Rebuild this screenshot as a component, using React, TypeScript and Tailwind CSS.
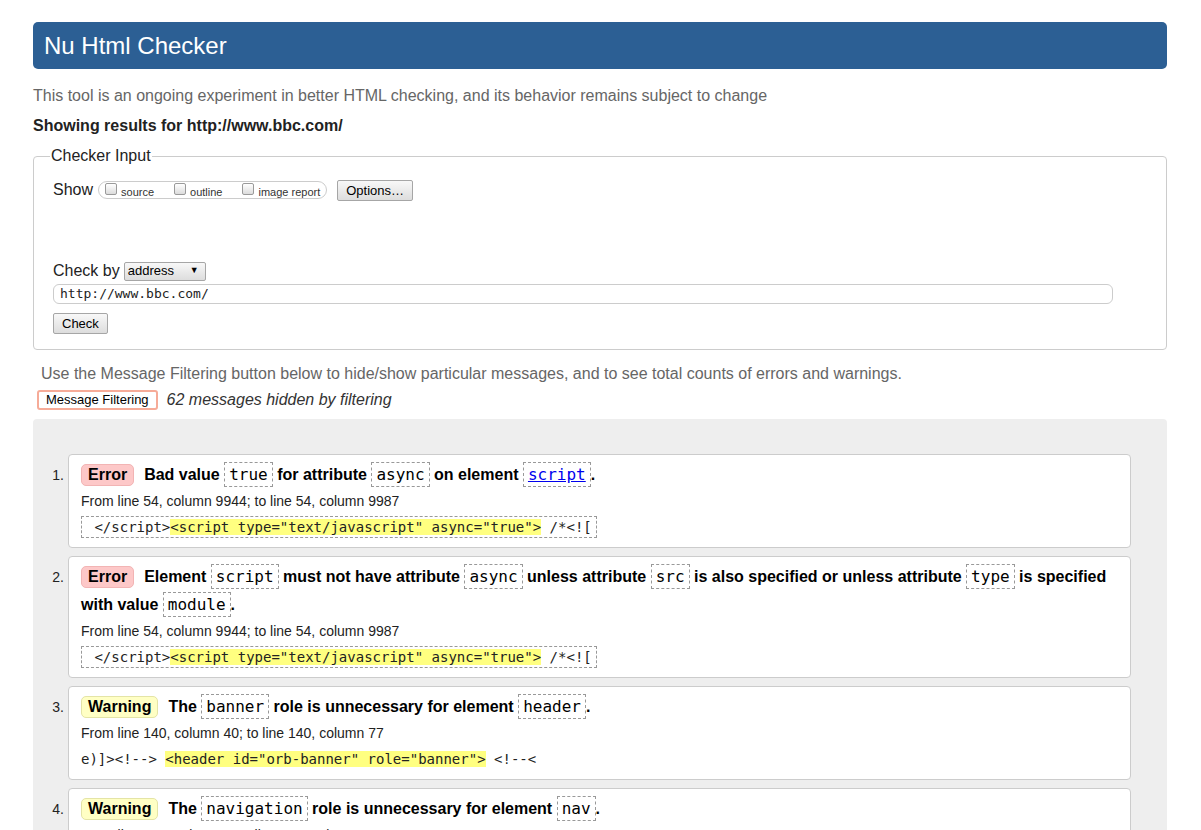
import React from 'react';

type Part = { t: string; code?: boolean; link?: boolean };

interface Message {
    kind: 'Error' | 'Warning';
    parts: Part[];
    location: string;
    extract: { before: string; hl: string; after: string; boxed: boolean };
}

const messages: Message[] = [
    {
        kind: 'Error',
        parts: [
            { t: 'Bad value' },
            { t: 'true', code: true },
            { t: 'for attribute' },
            { t: 'async', code: true },
            { t: 'on element' },
            { t: 'script', code: true, link: true },
        ],
        location: 'From line 54, column 9944; to line 54, column 9987',
        extract: { before: ' </script>', hl: '<script type="text/javascript" async="true">', after: ' /*<![', boxed: true },
    },
    {
        kind: 'Error',
        parts: [
            { t: 'Element' },
            { t: 'script', code: true },
            { t: 'must not have attribute' },
            { t: 'async', code: true },
            { t: 'unless attribute' },
            { t: 'src', code: true },
            { t: 'is also specified or unless attribute' },
            { t: 'type', code: true },
            { t: 'is specified with value' },
            { t: 'module', code: true },
        ],
        location: 'From line 54, column 9944; to line 54, column 9987',
        extract: { before: ' </script>', hl: '<script type="text/javascript" async="true">', after: ' /*<![', boxed: true },
    },
    {
        kind: 'Warning',
        parts: [
            { t: 'The' },
            { t: 'banner', code: true },
            { t: 'role is unnecessary for element' },
            { t: 'header', code: true },
        ],
        location: 'From line 140, column 40; to line 140, column 77',
        extract: { before: 'e)]><!--> ', hl: '<header id="orb-banner" role="banner">', after: ' <!--<', boxed: false },
    },
    {
        kind: 'Warning',
        parts: [
            { t: 'The' },
            { t: 'navigation', code: true },
            { t: 'role is unnecessary for element' },
            { t: 'nav', code: true },
        ],
        location: 'From line 141, column 5; to line 141, column 48',
        extract: { before: '', hl: '<nav role="navigation">', after: '', boxed: false },
    },
];

const mono = "font-['DejaVu_Sans_Mono',monospace]";

const Checkbox = ({ label }: { label: string }) => (
    <span className="flex items-start">
        <span className="mt-[1px] w-[12px] h-[12px] rounded-[2px] border border-[#9a9a9a] bg-gradient-to-b from-[#ffffff] to-[#dcdcdc]"></span>
        <span className="ml-[4px] mt-[4px] text-[11px] leading-[13px] text-[#333]">{label}</span>
    </span>
);

const MessageCard = ({ m, idx }: { m: Message; idx: number }) => (
    <div className="flex">
        <div className="w-[35px] shrink-0 text-right pr-[4px] pt-[7px] text-[14px] leading-[28px] text-[#222]">{idx + 1}.</div>
        <div className="flex-1 bg-white border border-[#cccccc] rounded-[4px] px-[12px] pt-[6px] pb-[8px]">
            <p className="text-[16px] leading-[28px] font-bold text-black">
                <span
                    className={
                        m.kind === 'Error'
                            ? 'inline-block leading-[20px] px-[6px] rounded-[5px] border border-[#f2b4b4] bg-[#fdc8c8] mr-[10px]'
                            : 'inline-block leading-[20px] px-[6px] rounded-[5px] border border-[#e4e4a6] bg-[#ffffc4] mr-[10px]'
                    }
                >
                    {m.kind}
                </span>
                {m.parts.map((p, i) => (
                    <React.Fragment key={i}>
                        {i > 0 && ' '}
                        {p.code ? (
                            <code className={`${mono} font-normal border border-dashed border-[#999] px-[4px] py-[2px]`}>
                                {p.link ? <span className="text-[#0000ee] underline">{p.t}</span> : p.t}
                            </code>
                        ) : (
                            p.t
                        )}
                    </React.Fragment>
                ))}
                .
            </p>
            <div className="text-[14px] leading-[24px] text-[#222]">{m.location}</div>
            {m.extract.boxed ? (
                <div className={`${mono} mt-[3px] inline-block text-[14px] leading-[20px] border border-dashed border-[#999] px-[4px] whitespace-pre text-[#222]`}>
                    {m.extract.before}
                    <span className="bg-[#ffff80]">{m.extract.hl}</span>
                    {m.extract.after}
                </div>
            ) : (
                <div className={`${mono} mt-[2px] text-[14px] leading-[24px] whitespace-pre text-[#222]`}>
                    {m.extract.before}
                    <span className="bg-[#ffff80]">{m.extract.hl}</span>
                    {m.extract.after}
                </div>
            )}
        </div>
    </div>
);

export default function App() {
    return (
        <div className="min-h-[830px] bg-white font-['Liberation_Sans',Arial,sans-serif] text-[#222] pl-[33px] pr-[34px] pt-[22px]">
            {/* Title bar */}
            <div className="h-[47px] bg-[#2c5f94] rounded-[5px] flex items-center pl-[11px]">
                <h1 className="text-white text-[24px] leading-[28px]">Nu Html Checker</h1>
            </div>

            <p className="mt-[17px] text-[16px] leading-[20px] text-[#666]">
                This tool is an ongoing experiment in better HTML checking, and its behavior remains subject to change
            </p>
            <p className="mt-[10px] text-[16px] leading-[20px] font-bold text-[#222]">Showing results for http://www.bbc.com/</p>

            {/* Checker input */}
            <fieldset className="mt-[10px] border border-[#cccccc] rounded-[4px] pl-[19px] pr-[19px] pb-[14px]">
                <legend className="text-[16px] leading-[20px] px-[1px] -ml-[3px] text-[#222]">Checker Input</legend>
                <div className="mt-[13px] h-[22px] flex items-center">
                    <span className="text-[16px] text-[#222]">Show</span>
                    <div className="ml-[5px] h-[18px] flex items-start gap-[20px] border border-[#cccccc] rounded-[9px] pl-[6px] pr-[6px]">
                        <Checkbox label="source" />
                        <Checkbox label="outline" />
                        <Checkbox label="image report" />
                    </div>
                    <button className="ml-[10px] h-[21px] px-[8px] text-[13px] text-black border border-[#a6a6a6] rounded-[2px] bg-gradient-to-b from-[#f8f8f8] to-[#dddddd]">
                        Options…
                    </button>
                </div>

                <div className="mt-[60px] h-[20px] flex items-center">
                    <span className="text-[16px] text-[#222]">Check by</span>
                    <div className="ml-[4px] w-[82px] h-[19px] flex items-center justify-between pl-[3px] pr-[6px] text-[13px] text-black border border-[#a6a6a6] rounded-[2px] bg-gradient-to-b from-[#f8f8f8] to-[#dddddd]">
                        <span>address</span>
                        <span className="text-[9px]">▼</span>
                    </div>
                </div>
                <div className={`${mono} mt-[3px] w-[1060px] h-[20px] flex items-center pl-[6px] text-[13px] text-[#222] border border-[#cccccc] rounded-[6px]`}>
                    http://www.bbc.com/
                </div>
                <button className="mt-[9px] h-[21px] px-[8px] text-[13px] text-black border border-[#a6a6a6] rounded-[2px] bg-gradient-to-b from-[#f8f8f8] to-[#dddddd]">
                    Check
                </button>
            </fieldset>

            <p className="mt-[14px] ml-[8px] text-[16px] leading-[20px] text-[#666]">
                Use the Message Filtering button below to hide/show particular messages, and to see total counts of errors and warnings.
            </p>
            <div className="mt-[6px] ml-[4px] h-[20px] flex items-center">
                <button className="h-[20px] px-[7px] text-[13px] text-black bg-white border-2 border-[#f6ab98] rounded-[3px] leading-[16px]">
                    Message Filtering
                </button>
                <span className="ml-[9px] text-[16px] leading-[20px] italic text-[#333]">62 messages hidden by filtering</span>
            </div>

            {/* Results */}
            <div className="mt-[9px] bg-[#eeeeee] rounded-t-[4px] pr-[36px] pt-[35px] pb-[20px] flex flex-col gap-[8px]">
                {messages.map((m, i) => (
                    <MessageCard key={i} m={m} idx={i} />
                ))}
            </div>
        </div>
    );
}
